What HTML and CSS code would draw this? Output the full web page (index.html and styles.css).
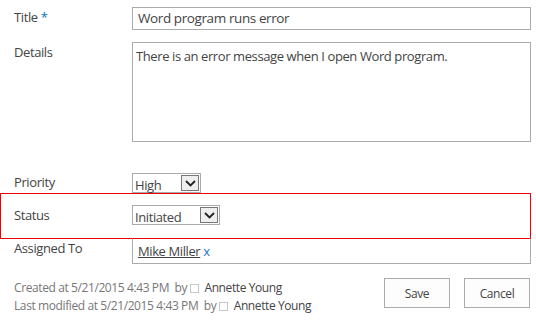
FILE: index.html
```html
<!DOCTYPE html>
<html lang="en">
<head>
    <meta charset="UTF-8">
    <title>Edit Item</title>
    <link rel="stylesheet" href="styles.css">
</head>
<body>
    <div class="form">
        <div class="row row-title">
            <div class="label">Title <span class="req">*</span></div>
            <div class="field"><div class="textbox">Word program runs error</div></div>
        </div>
        <div class="row row-details">
            <div class="label">Details</div>
            <div class="field"><div class="textarea">There is an error message when I open Word program.</div></div>
        </div>
        <div class="row row-priority">
            <div class="label">Priority</div>
            <div class="field">
                <div class="select select-priority"><span class="val">High</span><span class="arrow"><svg width="11" height="7" viewBox="0 0 11 7"><path d="M1 1l4.5 4.5L10 1" fill="none" stroke="#222" stroke-width="1.8"/></svg></span></div>
            </div>
        </div>
        <div class="highlight">
            <div class="row row-status">
                <div class="label">Status</div>
                <div class="field">
                    <div class="select select-status"><span class="val">Initiated</span><span class="arrow"><svg width="11" height="7" viewBox="0 0 11 7"><path d="M1 1l4.5 4.5L10 1" fill="none" stroke="#222" stroke-width="1.8"/></svg></span></div>
                </div>
            </div>
        </div>
        <div class="row row-assigned">
            <div class="label">Assigned To</div>
            <div class="field"><div class="people"><a class="person" href="#">Mike Miller</a> <span class="remove">x</span></div></div>
        </div>
        <div class="footer">
            <div class="meta">
                <div>Created at 5/21/2015 4:43 PM&nbsp; by <span class="presence"></span> <span class="user">Annette Young</span></div>
                <div>Last modified at 5/21/2015 4:43 PM&nbsp; by <span class="presence"></span> <span class="user">Annette Young</span></div>
            </div>
            <div class="buttons">
                <button class="btn">Save</button>
                <button class="btn">Cancel</button>
            </div>
        </div>
    </div>
</body>
</html>
```

FILE: styles.css
```css
body {
    margin: 0;
    background: #fff;
    font-family: "Open Sans", "Noto Sans", sans-serif;
    font-size: 13px;
    letter-spacing: -0.4px;
    color: #444;
}
.form {
    width: 531px;
    padding-top: 7px;
}
.row {
    display: flex;
    padding-left: 14px;
}
.label {
    width: 118px;
    flex: none;
    line-height: 18px;
    padding-top: 1px;
}
.req {
    color: #0072c6;
}
.field {
    flex: 1;
}
.textbox {
    height: 21px;
    border: 1px solid #ababab;
    padding-left: 5px;
    line-height: 21px;
    font-size: 13.5px;
    color: #444;
}
.row-details {
    margin-top: 12px;
}
.textarea {
    border: 1px solid #ababab;
    padding: 4px 3px;
    box-sizing: border-box;
    height: 100px;
    line-height: 18px;
}
.row-priority {
    margin-top: 31px;
    height: 20px;
}
.row-priority .label {
    padding-top: 0;
}
.select {
    display: inline-flex;
    height: 20px;
    box-sizing: border-box;
    border: 1px solid #ababab;
}
.select .val {
    padding: 0 2px;
    line-height: 20px;
    margin-top: 1px;
}
.select-priority .val { width: 43px; }
.select-status .val { width: 62px; }
.select .arrow {
    width: 18px;
    height: 16px;
    margin: 1px;
    border: 1px solid #777;
    box-sizing: border-box;
    background: #eee;
    display: flex;
    align-items: center;
    justify-content: center;
}
.highlight {
    border: 1px solid #e00;
    height: 44px;
}
.row-status {
    padding-left: 13px;
    padding-top: 11px;
}
.row-assigned {
    margin-top: -1px;
}
.people {
    border: 1px solid #ababab;
    border-top-color: transparent;
    height: 26px;
    box-sizing: border-box;
    padding-left: 5px;
    line-height: 24px;
}
.person {
    color: #444;
}
.remove {
    color: #1a73c8;
}
.footer {
    display: flex;
    justify-content: space-between;
    padding-left: 14px;
    margin-top: 14px;
}
.meta {
    color: #777;
    font-size: 12px;
    line-height: 18px;
    padding-top: 1px;
}
.presence {
    display: inline-block;
    width: 7px;
    height: 7px;
    border: 1px solid #c6c6c6;
    vertical-align: -1px;
}
.user {
    color: #444;
    margin-left: 3px;
}
.buttons {
    display: flex;
    gap: 14px;
    padding-right: 1px;
}
.btn {
    width: 66px;
    height: 30px;
    border: 1px solid #ababab;
    background: #fdfdfd;
    font-family: "Open Sans", "Noto Sans", sans-serif;
    font-size: 12px;
    letter-spacing: -0.4px;
    color: #444;
}
```
